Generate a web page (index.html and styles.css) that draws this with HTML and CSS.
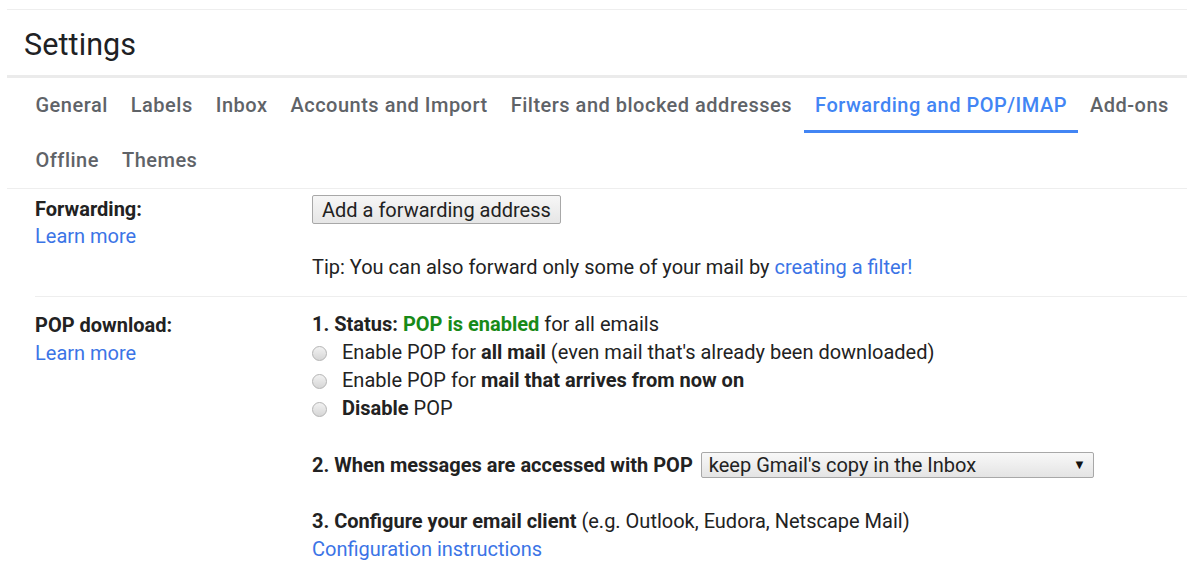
FILE: index.html
```html
<!DOCTYPE html>
<html lang="en">
<head>
<meta charset="utf-8">
<title>Settings</title>
<link rel="stylesheet" href="styles.css">
</head>
<body>
<div class="page">
  <div class="header"><h1 class="title">Settings</h1></div>
  <nav class="tabs">
    <a class="tab">General</a>
    <a class="tab">Labels</a>
    <a class="tab">Inbox</a>
    <a class="tab">Accounts and Import</a>
    <a class="tab">Filters and blocked addresses</a>
    <a class="tab active">Forwarding and POP/IMAP</a>
    <a class="tab">Add-ons</a>
    <a class="tab">Offline</a>
    <a class="tab">Themes</a>
  </nav>
  <div class="sections">
    <div class="section fwd">
      <div class="label">
        <div class="label-title">Forwarding:</div>
        <a class="link">Learn more</a>
      </div>
      <div class="content">
        <div class="btn-row"><button class="btn">Add a forwarding address</button></div>
        <div class="tip">Tip: You can also forward only some of your mail by <a class="link">creating a filter!</a></div>
      </div>
    </div>
    <div class="section pop">
      <div class="label">
        <div class="label-title">POP download:</div>
        <a class="link">Learn more</a>
      </div>
      <div class="content">
        <div class="status"><b>1. Status:</b> <b class="green">POP is enabled</b> for all emails</div>
        <label class="radio-row"><span class="radio"></span><span>Enable POP for <b>all mail</b> (even mail that's already been downloaded)</span></label>
        <label class="radio-row"><span class="radio"></span><span>Enable POP for <b>mail that arrives from now on</b></span></label>
        <label class="radio-row"><span class="radio"></span><span><b>Disable</b> POP</span></label>
        <div class="when"><b>2. When messages are accessed with POP</b><div class="select"><span>keep Gmail's copy in the Inbox</span><span class="arrow">▼</span></div></div>
        <div class="config"><b>3. Configure your email client</b> (e.g. Outlook, Eudora, Netscape Mail)</div>
        <a class="link line">Configuration instructions</a>
      </div>
    </div>
  </div>
</div>
</body>
</html>
```
FILE: styles.css
```css
html, body {
  margin: 0;
  padding: 0;
  background: #fff;
}
body {
  font-family: Roboto, "Liberation Sans", Arial, sans-serif;
  font-size: 20px;
  color: #222;
}
.page {
  margin: 9px 0 0 7px;
  border-top: 1px solid #eeeeee;
}
.header {
  box-sizing: border-box;
  height: 65px;
  padding: 3px 0 0 17px;
  display: flex;
  align-items: center;
  border-bottom: 3px solid #ebebeb;
}
.header {
  height: 68px;
}
.title {
  margin: 0;
  font-weight: 400;
  font-size: 30.5px;
  color: #202124;
  letter-spacing: 0.1px;
}
.tabs {
  display: flex;
  flex-wrap: wrap;
  padding-left: 17px;
  border-bottom: 1px solid #eeeeee;
}
.tab {
  box-sizing: border-box;
  height: 55px;
  padding: 1px 11.5px 0;
  display: flex;
  align-items: center;
  border-bottom: 3px solid transparent;
  font-weight: 500;
  font-size: 20px;
  color: #5f6368;
  letter-spacing: 0.5px;
  cursor: pointer;
}
.tab.active {
  color: #4285f4;
  border-bottom-color: #4285f4;
}
.sections {
  margin-left: 28px;
}
.section {
  display: grid;
  grid-template-columns: 277px 1fr;
  line-height: 28px;
}
.fwd {
  padding: 6px 0 15px;
  border-bottom: 1px solid #eeeeee;
}
.pop {
  padding-top: 14px;
}
.label {
  display: flex;
  flex-direction: column;
  align-items: flex-start;
}
.label-title {
  font-weight: 700;
  line-height: 28px;
}
.fwd .label-title { line-height: 29px; }
.fwd .label .link { line-height: 25px; }
.link {
  color: #3b74e6;
  cursor: pointer;
}
.line { display: block; }
.content {
  display: flex;
  flex-direction: column;
  align-items: flex-start;
}
.btn-row { display: flex; }
.btn {
  box-sizing: border-box;
  height: 29px;
  padding: 0 9px;
  font-family: inherit;
  font-size: 20px;
  color: #222;
  background: linear-gradient(#f6f6f6, #e6e6e6);
  border: 1px solid #a8a8a8;
  border-radius: 2px;
}
.tip {
  margin-top: 29px;
}
.green {
  color: #188a18;
}
.status {
  line-height: 27px;
}
.radio-row {
  display: flex;
  align-items: center;
  gap: 15px;
  height: 28px;
}
.radio {
  box-sizing: border-box;
  width: 15px;
  height: 15px;
  border-radius: 50%;
  border: 1px solid #b4b4b4;
  background: linear-gradient(#f2f2f2, #d6d6d6);
  margin-top: 2px;
}
.when {
  margin-top: 29px;
  display: flex;
  align-items: center;
  gap: 8px;
  height: 28px;
}
.select {
  box-sizing: border-box;
  width: 393px;
  height: 26px;
  display: flex;
  align-items: center;
  justify-content: space-between;
  padding: 0 7px 0 7px;
  border: 1px solid #a8a8a8;
  border-radius: 2px;
  background: linear-gradient(#f8f8f8, #e4e4e4);
}
.arrow {
  font-size: 13px;
  color: #111;
}
.config {
  margin-top: 28px;
}
```
